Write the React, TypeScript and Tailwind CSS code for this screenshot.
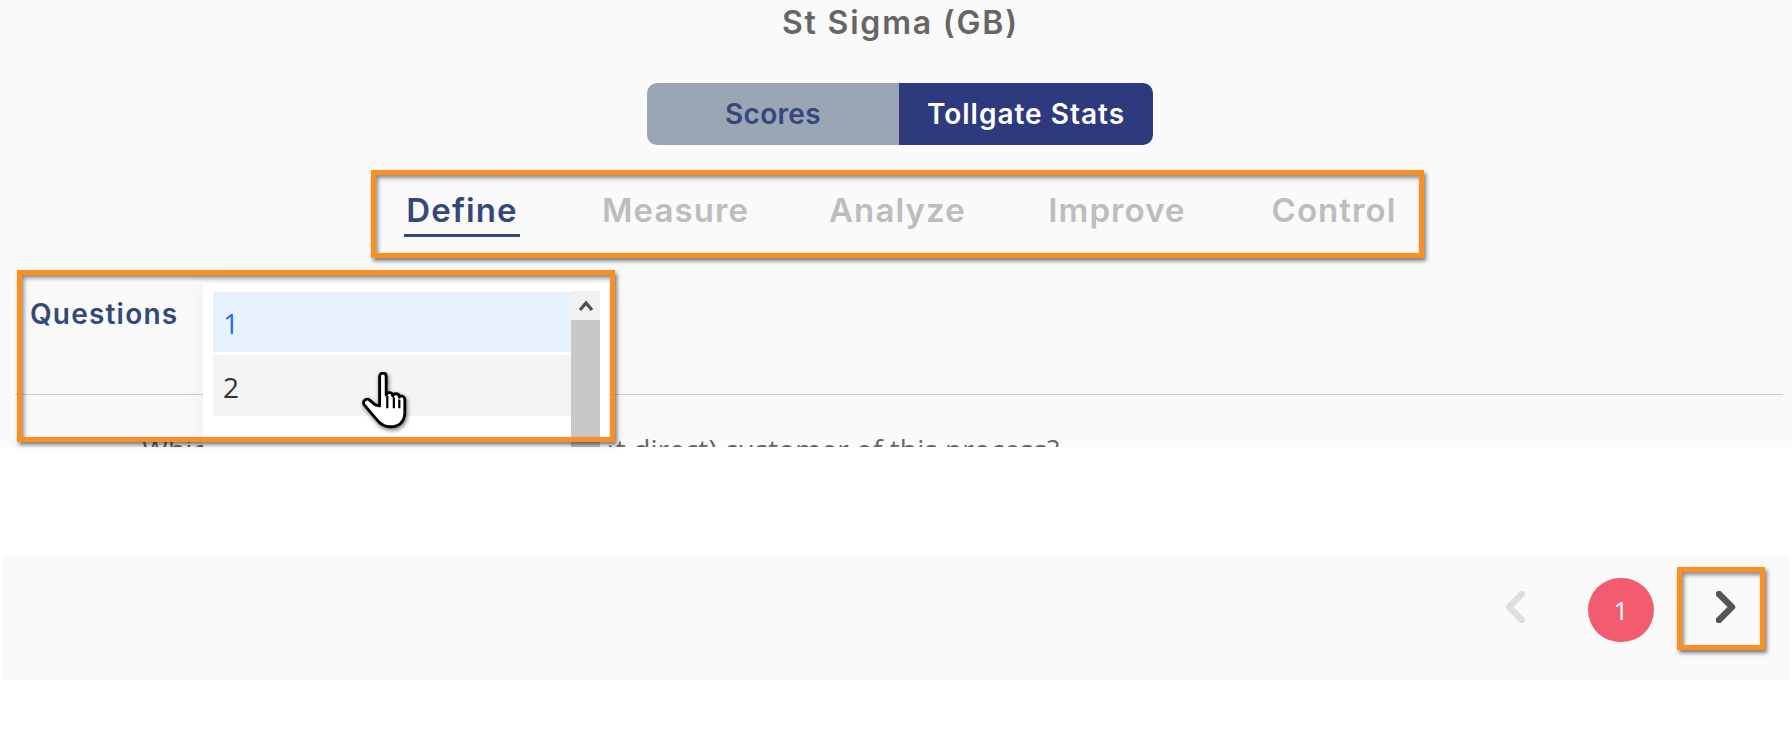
import React from "react";

const sans = "font-['Inter',sans-serif]";
const body = "font-['Open_Sans',sans-serif]";
const frame =
  "absolute border-[5px] border-[#f9901f] shadow-[2px_3px_4px_rgba(0,0,0,0.5),inset_2px_3px_4px_rgba(0,0,0,0.45)] pointer-events-none";

function Hand() {
  return (
    <svg viewBox="0 0 42 52" width="46" height="57" className="absolute left-[361px] top-[372px] drop-shadow-[1px_2px_2px_rgba(0,0,0,0.55)]">
      <path
        d="M17 4c0-4 6-4 6 0v17c1-3 6-3 6 1 1-3 6-3 6 1 1-2 5-1 5 2v12c0 8-5 13-13 13-6 0-10-3-13-7L3 30c-2-3 1-6 4-5l6 5 4 1z"
        fill="#fff"
        stroke="#000"
        strokeWidth="2.6"
        strokeLinejoin="round"
      />
      <path d="M24 22v11M30 23v10M35 25v8" stroke="#000" strokeWidth="2" fill="none" />
    </svg>
  );
}

function Chevron({ dir, color }: { dir: "l" | "r"; color: string }) {
  return (
    <svg viewBox="0 0 20 32" width="20" height="32">
      <path
        d={dir === "l" ? "M17 3 4 16l13 13" : "M3 3l13 13L3 29"}
        fill="none"
        stroke={color}
        strokeWidth="6.5"
        strokeLinecap="round"
        strokeLinejoin="round"
      />
    </svg>
  );
}

export default function App() {
  return (
    <div className="relative h-[730px] w-[1792px] overflow-hidden bg-white">
      <section className="relative h-[447px] overflow-hidden bg-[#fafafa]">
        <h1 className={`${sans} ml-[782px] pt-[3px] whitespace-nowrap text-[32px] font-semibold leading-[40px] tracking-[1.8px] text-[#666666]`}>
          St Sigma (GB)
        </h1>
        <div className="ml-[647px] mt-[40px] flex h-[62px] w-[506px] overflow-hidden rounded-[10px]">
          <div className={`${sans} flex w-[252px] items-center justify-center bg-[#9aa5b6] text-[28px] font-semibold tracking-[0.3px] text-[#34497a]`}>Scores</div>
          <div className={`${sans} flex flex-1 items-center justify-center bg-[#2d3a7e] text-[28px] font-semibold tracking-[1px] text-white`}>Tollgate Stats</div>
        </div>
        <nav className={`${sans} ml-[404px] mt-[43px] flex h-[60px] text-[33px] font-semibold leading-[44px] tracking-[1.1px] text-[#bdbdbd]`}>
          <div className="h-[49px] w-[116px] border-b-[3px] border-[#34497a] text-center text-[#34497a]">Define</div>
          <div className="ml-[82px] w-[147px] text-center">Measure</div>
          <div className="ml-[80px] w-[136px] text-center">Analyze</div>
          <div className="ml-[80px] w-[144px] text-center">Improve</div>
          <div className="ml-[80px] w-[130px] text-center">Control</div>
        </nav>
        <div className={`${sans} ml-[30px] mt-[49px] text-[28px] font-semibold leading-[34px] tracking-[1.2px] text-[#34497a]`}>Questions</div>
        <div className="ml-[15px] mr-[9px] mt-[63px] border-t border-[#cccccc]" />
        <p className={`${body} ml-[142px] mt-[35px] whitespace-nowrap text-[28.2px] leading-[38px] text-[#666666]`}>
          Which of the following is the last (not direct) customer of this process?
        </p>
        <div className="absolute left-[203px] top-[283px] h-[190px] w-[406px] bg-white shadow-[0_0_24px_rgba(0,0,0,0.06)]">
          <div className={`${body} absolute left-[10px] top-[9px] w-[358px] text-[28px] text-[#333333]`}>
            <div className="flex h-[60px] items-center bg-[#e8f1fe] pl-[10px] pt-[2px] text-[#1a73f0]">1</div>
            <div className="mt-[3px] flex h-[61px] items-center bg-[#f4f4f4] pl-[10px] pt-[2px]">2</div>
          </div>
          <div className="absolute left-[368px] top-[8px] flex h-[180px] w-[29px] flex-col bg-[#f1f1f1]">
            <div className="flex h-[29px] items-center justify-center">
              <svg viewBox="0 0 16 12" width="16" height="12">
                <path d="M2 10l6-7 6 7" fill="none" stroke="#505050" strokeWidth="3.2" />
              </svg>
            </div>
            <div className="flex-1 bg-[#c8c8c8]" />
          </div>
        </div>
      </section>

      <footer className="mx-[2px] mt-[108px] flex h-[125px] items-start bg-[#fafafa]">
        <div className="ml-[1503px] mt-[36px]"><Chevron dir="l" color="#dedede" /></div>
        <div className={`${body} ml-[63px] mt-[23px] flex h-[64px] w-[66px] items-center justify-center rounded-full bg-[#f25c6e] text-[26px] text-white`}>1</div>
        <div className="ml-[62px] mt-[36px]"><Chevron dir="r" color="#555555" /></div>
      </footer>

      <div className={`${frame} left-[371px] top-[170px] h-[88px] w-[1053px]`} />
      <div className={`${frame} left-[17px] top-[270px] h-[172px] w-[598px]`} />
      <div className={`${frame} left-[1677px] top-[567px] h-[83px] w-[88px]`} />
      <Hand />
    </div>
  );
}
